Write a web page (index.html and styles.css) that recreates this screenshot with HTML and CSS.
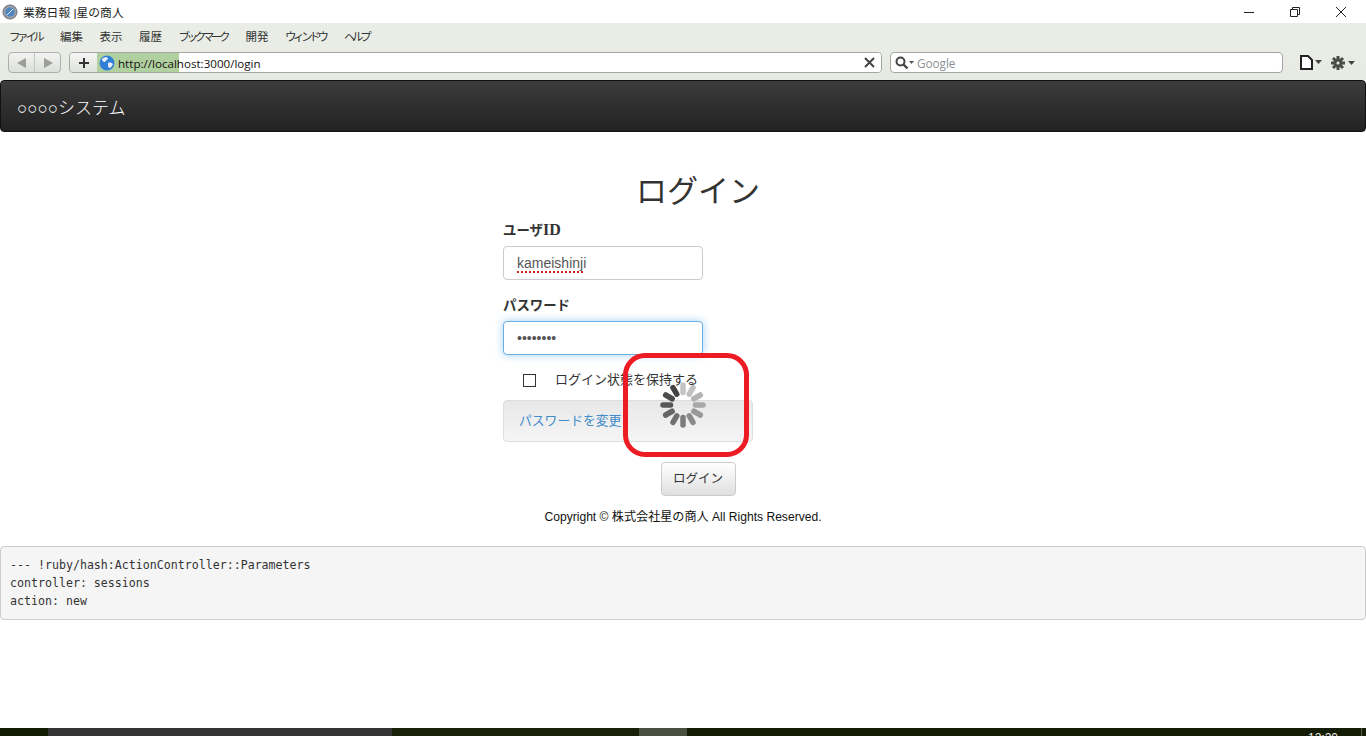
FILE: index.html
```html
<!DOCTYPE html>
<html lang="ja">
	<head>
		<meta charset="utf-8">
		<title>業務日報 |星の商人</title>
		<link rel="stylesheet" href="styles.css">
	</head>
	<body>
		<div class="titlebar">
			<svg class="favicon" width="16" height="16" viewBox="0 0 16 16">
				<circle cx="8" cy="8" r="7" fill="#9a9ea6" stroke="#6a7078"/>
				<circle cx="8" cy="8" r="4.6" fill="#4d86c4"/>
				<path d="M5 11 9 7 11 5 7 9z" fill="#e8e8e8" stroke="#e8e8e8"/>
			</svg>
			<span class="title-text">業務日報 |星の商人</span>
			<div class="win-btns">
				<svg width="12" height="12" viewBox="0 0 12 12"><path d="M1 6.5h10" stroke="#222"/></svg>
				<svg width="12" height="12" viewBox="0 0 12 12"><path d="M1.5 3.5h7v7h-7zM3.5 3.5v-2h7v7h-2" fill="none" stroke="#222"/></svg>
				<svg width="12" height="12" viewBox="0 0 12 12"><path d="M1 1 11 11M11 1 1 11" stroke="#222"/></svg>
			</div>
		</div>
		<ul class="menubar">
			<li class="kana">ファイル</li>
			<li>編集</li>
			<li>表示</li>
			<li>履歴</li>
			<li class="kana">ブックマーク</li>
			<li>開発</li>
			<li class="kana">ウィンドウ</li>
			<li class="kana">ヘルプ</li>
		</ul>
		<div class="toolbar">
			<div class="nav-btns">
				<span class="nav-btn"><svg width="12" height="12" viewBox="0 0 12 12"><path d="M10 1v10L1 6z" fill="#9a9d98"/></svg></span>
				<span class="nav-btn"><svg width="12" height="12" viewBox="0 0 12 12"><path d="M2 1v10l9-5z" fill="#9a9d98"/></svg></span>
			</div>
			<div class="url-box">
				<span class="add-btn"><svg width="12" height="12" viewBox="0 0 12 12"><path d="M6 1v10M1 6h10" stroke="#333" stroke-width="2"/></svg></span>
				<div class="url-field">
					<div class="url-progress"></div>
					<svg class="globe" width="16" height="16" viewBox="0 0 16 16">
						<circle cx="8" cy="8" r="7.5" fill="#2f7fd6"/>
						<path d="M3 4c2-2 5-2 6-1 0 2-2 2-3 4-2 0-3-1-3-3zM9 8c2-1 4 0 5 1-1 2-2 4-4 4-1-1-1-3-1-5z" fill="#e9f2fb"/>
					</svg>
					<span class="url-text">http://localhost:3000/login</span>
					<svg class="url-clear" width="11" height="11" viewBox="0 0 11 11"><path d="M1 1 10 10M10 1 1 10" stroke="#444" stroke-width="2"/></svg>
				</div>
			</div>
			<div class="search-box">
				<svg width="20" height="14" viewBox="0 0 20 14">
					<circle cx="5.5" cy="5.500" r="4" fill="none" stroke="#444" stroke-width="2"/>
					<path d="M8.500 8.500 12.500 12.500" stroke="#444" stroke-width="2.400"/>
					<path d="M14 5h5l-2.500 3z" fill="#555"/>
				</svg>
				<span class="search-hint">Google</span>
			</div>
			<div class="tool-icons">
				<svg width="22" height="15" viewBox="0 0 22 15">
					<path d="M1 1h7l4 4v9H1z" fill="#fff" stroke="#222" stroke-width="2"/>
					<path d="M15 5h7l-3.500 4z" fill="#444"/>
				</svg>
				<svg width="25" height="16" viewBox="0 0 25 16">
					<g stroke="#4a4f45" stroke-width="3">
						<path d="M8 1v14M1 8h14M3 3l10 10M13 3 3 13"/>
					</g>
					<circle cx="8" cy="8" r="4.500" fill="#4a4f45"/>
					<circle cx="8" cy="8" r="1.500" fill="#e9ede6"/>
					<path d="M18 6h7l-3.500 4z" fill="#444"/>
				</svg>
			</div>
		</div>

		<div class="navbar"><a class="brand" href="javascript:void(0)">○○○○システム</a></div>

		<div class="login">
			<h1>ログイン</h1>
			<form class="login-form">
				<label for="uid">ユーザ<span class="latin">ID</span></label>
				<input class="text-input typo" id="uid" type="text" value="kameishinji">
				<label for="pw">パスワード</label>
				<input class="text-input focused" id="pw" type="password" value="12345678">
				<div class="remember">
					<input type="checkbox" id="keep">
					<label for="keep">ログイン状態を保持する</label>
				</div>
				<div class="well"><a href="javascript:void(0)">パスワードを変更</a></div>
				<div class="submit-row"><button type="button" class="btn">ログイン</button></div>
			</form>
		</div>
		<p class="copyright">Copyright © 株式会社星の商人 All Rights Reserved.</p>
		<pre class="debug">--- !ruby/hash:ActionController::Parameters
controller: sessions
action: new</pre>

		<div class="taskbar">
			<span class="task-start"></span>
			<span class="task-app"></span>
			<span class="task-gap"></span>
			<span class="task-active"></span>
			<span class="task-rest"><span class="clock">12:20</span></span>
			<span class="task-show"></span>
		</div>

		<!-- 赤枠とスピナーは画面の上に重ねる -->
		<div class="red-frame"></div>
		<svg class="spinner" width="46" height="46" viewBox="-23 -23 46 46">
			<g stroke-width="5.500" stroke-linecap="round">
				<line x1="0" y1="-12.500" x2="0" y2="-20" stroke="#c4c4c4"/>
				<line x1="0" y1="-12.500" x2="0" y2="-20" stroke="#c0c0c0" transform="rotate(30)"/>
				<line x1="0" y1="-12.500" x2="0" y2="-20" stroke="#b4b4b4" transform="rotate(60)"/>
				<line x1="0" y1="-12.500" x2="0" y2="-20" stroke="#a8a8a8" transform="rotate(90)"/>
				<line x1="0" y1="-12.500" x2="0" y2="-20" stroke="#999" transform="rotate(120)"/>
				<line x1="0" y1="-12.500" x2="0" y2="-20" stroke="#8a8a8a" transform="rotate(150)"/>
				<line x1="0" y1="-12.500" x2="0" y2="-20" stroke="#7c7c7c" transform="rotate(180)"/>
				<line x1="0" y1="-12.500" x2="0" y2="-20" stroke="#707070" transform="rotate(210)"/>
				<line x1="0" y1="-12.500" x2="0" y2="-20" stroke="#666" transform="rotate(240)"/>
				<line x1="0" y1="-12.500" x2="0" y2="-20" stroke="#585858" transform="rotate(270)"/>
				<line x1="0" y1="-12.500" x2="0" y2="-20" stroke="#4c4c4c" transform="rotate(300)"/>
				<line x1="0" y1="-12.500" x2="0" y2="-20" stroke="#444" transform="rotate(330)"/>
			</g>
		</svg>
	</body>
</html>
```

FILE: styles.css
```css
* {
	padding: 0;
	margin: 0;
	box-sizing: border-box;
}
ul {
	list-style: none;
}
a {
	text-decoration: none;
}
html, body {
	width: 100%;
	height: 100%;
}
body {
	position: relative;
	display: flex;
	flex-direction: column;
	overflow: hidden;
	background: #fff;
	color: #333;
	font-family: "Liberation Sans", "Noto Sans CJK JP", sans-serif;
	font-size: 13px;
}

/* browser chrome */
.titlebar {
	display: flex;
	align-items: center;
	height: 23px;
	padding-left: 2px;
	color: #222;
	font-size: 11.800px;
	flex: none;
}
.favicon {
	margin-right: 5px;
}
.win-btns {
	display: flex;
	margin-left: auto;
	margin-right: 19px;
	gap: 34px;
}
.menubar {
	display: flex;
	gap: 16.500px;
	height: 25px;
	padding: 6px 0 0 9px;
	background: #e9ede6;
	color: #333;
	font-size: 11.500px;
	line-height: 16px;
	flex: none;
}
.menubar .kana {
	margin-right: 2px;
	letter-spacing: -3.400px;
}
.toolbar {
	display: flex;
	align-items: flex-start;
	height: 32px;
	padding: 4px 0 0 8px;
	background: linear-gradient(#e9ede6, #e6eae2);
	flex: none;
}
.nav-btns {
	display: flex;
	width: 53px;
	height: 21px;
	border: 1px solid #aeb1ab;
	border-radius: 4px;
	background: linear-gradient(#f3f4f2, #dcdfda);
}
.nav-btn {
	display: flex;
	align-items: center;
	justify-content: center;
	flex: 1;
}
.nav-btn + .nav-btn {
	border-left: 1px solid #c4c7c1;
}
.url-box {
	display: flex;
	width: 813px;
	height: 21px;
	margin-left: 8px;
	border: 1px solid #a5a8a2;
	border-radius: 4px;
	overflow: hidden;
}
.add-btn {
	display: flex;
	align-items: center;
	justify-content: center;
	width: 27px;
	background: linear-gradient(#f5f6f4, #dfe2dd);
	flex: none;
}
.url-field {
	position: relative;
	display: flex;
	align-items: center;
	flex: 1;
	background: #fff;
}
.url-progress {
	position: absolute;
	left: 0;
	top: 0;
	bottom: 0;
	width: 82px;
	background: #b1d09f;
}
.globe, .url-text {
	position: relative;
}
.globe {
	margin-left: 2px;
}
.url-text {
	margin-left: 3px;
	padding-top: 1px;
	color: #111;
	font-family: "Open Sans", sans-serif;
	font-size: 11.600px;
}
.url-clear {
	margin-left: auto;
	margin-right: 6px;
}
.search-box {
	display: flex;
	align-items: center;
	width: 393px;
	height: 21px;
	margin-left: 8px;
	padding-left: 4px;
	border: 1px solid #a5a8a2;
	border-radius: 4px;
	background: #fff;
}
.search-hint {
	margin-left: 2px;
	padding-top: 1px;
	color: #8a8f92;
	font-family: "Open Sans", sans-serif;
	font-size: 11.700px;
}
.tool-icons {
	display: flex;
	align-items: center;
	gap: 8px;
	height: 21px;
	margin-left: 17px;
}

/* page */
.navbar {
	display: flex;
	align-items: center;
	height: 52px;
	padding-left: 16px;
	border: 1px solid #111;
	border-radius: 4px;
	background: linear-gradient(#3c3c3c, #222);
	flex: none;
}
.brand {
	color: #fff;
	font-size: 17px;
	font-weight: 300;
}
.login {
	width: 390px;
	margin-left: 503px;
	flex: none;
}
.login h1 {
	margin: 40px 0 9px;
	color: #333;
	font-size: 31px;
	font-weight: 400;
	line-height: 40px;
	text-align: center;
}
.login-form > label {
	display: block;
	height: 20px;
	margin-bottom: 5px;
	font-family: "Liberation Serif", "Noto Sans CJK JP", serif;
	font-size: 13.400px;
	font-weight: 700;
	line-height: 20px;
}
.latin {
	font-size: 16px;
	line-height: 1;
}
.text-input {
	display: block;
	width: 200px;
	height: 34px;
	margin-bottom: 15px;
	padding: 0 13px;
	border: 1px solid #ccc;
	border-radius: 4px;
	color: #555;
	font-family: "Liberation Sans", sans-serif;
	font-size: 14px;
	outline: none;
}
/* スペルチェックの赤い波線 */
.typo {
	margin-bottom: 16px;
	background: repeating-linear-gradient(90deg, #d02020 0 2px, transparent 2px 4px) no-repeat 13px 24px / 67px 2px;
}
.focused {
	border-color: #66afe9;
	box-shadow: 0 0 8px rgba(102, 175, 233, .6);
}
.remember {
	display: flex;
	align-items: center;
	height: 20px;
	padding-left: 20px;
	margin-bottom: 10px;
}
.remember input {
	width: 13px;
	height: 13px;
	margin-right: 19px;
	border: 1px solid #333;
	background: #fff;
	appearance: none;
}
.remember label {
	padding-bottom: 3px;
}
.well {
	width: 250px;
	height: 42px;
	padding-left: 15px;
	border: 1px solid #ddd;
	border-radius: 4px;
	background: linear-gradient(#e8e8e8, #f5f5f5);
	font-size: 12.800px;
	line-height: 40px;
}
.well a {
	color: #428bca;
}
.submit-row {
	margin-top: 20px;
	text-align: center;
}
.btn {
	width: 75px;
	height: 34px;
	padding-bottom: 3px;
	border: 1px solid #ccc;
	border-radius: 4px;
	background: linear-gradient(#fff, #e0e0e0);
	color: #333;
	font-family: inherit;
	font-size: 12.500px;
}
.copyright {
	margin-top: 14px;
	color: #111;
	font-size: 12.100px;
	line-height: 14px;
	text-align: center;
	flex: none;
}
.debug {
	margin-top: 22px;
	padding: 9px 9px;
	border: 1px solid #ccc;
	border-radius: 4px;
	background: #f5f5f5;
	color: #333;
	font-family: "DejaVu Sans Mono", monospace;
	font-size: 11.620px;
	line-height: 18px;
	flex: none;
}

/* taskbar */
.taskbar {
	display: flex;
	height: 8px;
	margin-top: auto;
	overflow: hidden;
	flex: none;
}
.task-start {
	width: 48px;
	background: #121c00;
}
.task-app {
	width: 344px;
	background: #333;
}
.task-gap {
	width: 247px;
	background: #1a1f08;
}
.task-active {
	width: 48px;
	background: #4a5040;
}
.task-rest {
	flex: 1;
	padding-top: 3px;
	padding-left: 621px;
	background: #141d04;
	color: #eee;
	font-size: 12px;
	line-height: 14px;
}
.task-show {
	width: 5px;
	border-left: 1px solid #5a6050;
	background: #141d04;
}

/* overlay */
.red-frame {
	position: absolute;
	left: 623px;
	top: 353px;
	width: 126px;
	height: 104px;
	border: 5px solid #ed1c24;
	border-radius: 22px;
}
.spinner {
	position: absolute;
	left: 660px;
	top: 382px;
}
```
